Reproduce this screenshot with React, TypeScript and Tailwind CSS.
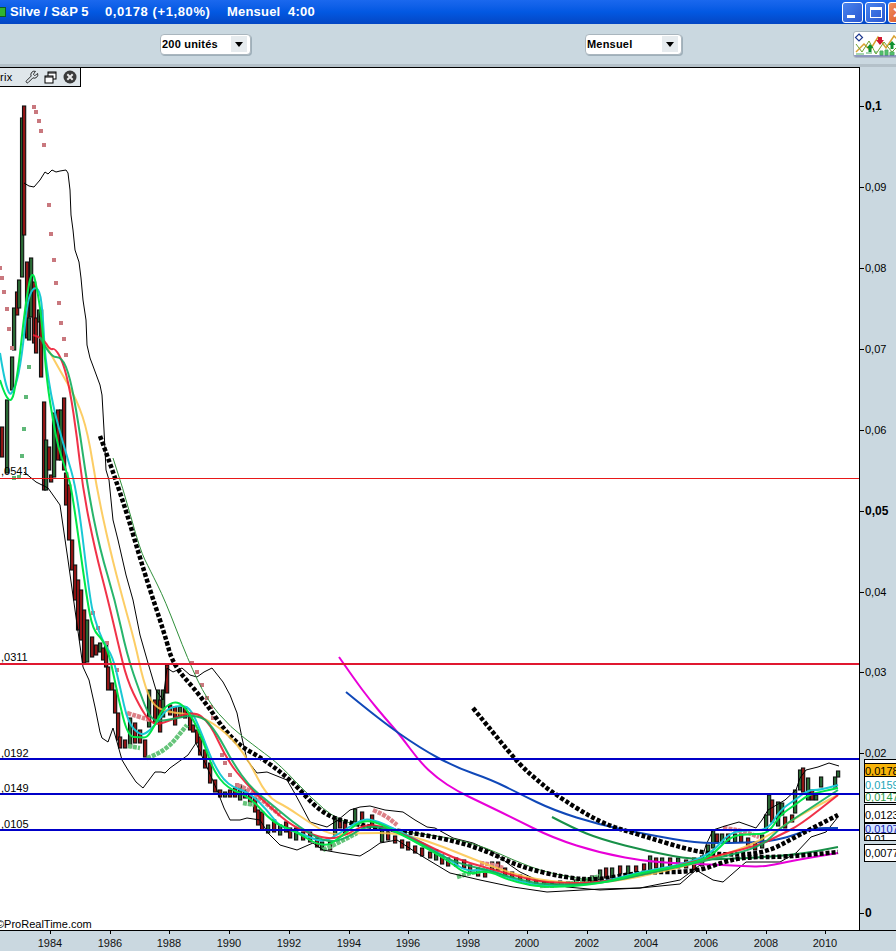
import React from 'react';
import { Wrench } from 'lucide-react';

type Pt = [number, number];
type Candle = [number, number, number, number];

// x, top, bottom, 1 = up (green), 0 = down (red)
const CANDLES: Candle[] = [
  [2,427,457,0],[7,400,473,1],[12,357,390,1],[14,308,350,1],[17,292,315,0],[19,280,308,1],[22,118,277,1],[24,106,235,0],
  [27,262,338,0],[29,318,340,1],[31,258,317,1],[34,282,343,0],[36,318,353,0],[39,310,322,1],[41,310,377,0],[44,402,490,0],
  [46,440,490,1],[49,447,470,0],[51,475,482,0],[54,413,477,1],[58,410,460,0],[61,410,460,1],[64,398,470,0],[66,473,505,0],
  [69,485,540,0],[72,540,570,0],[75,565,600,0],[78,580,630,0],[81,590,640,0],[84,610,663,0],[87,620,662,1],[92,637,657,0],
  [96,645,655,0],[100,643,652,1],[103,648,660,0],[106,645,667,0],[108,667,690,0],[112,683,690,0],[115,690,713,0],[118,713,740,0],
  [120,737,748,0],[125,740,748,0],[130,718,747,1],[135,723,743,0],[140,730,743,0],[145,740,757,0],[149,690,727,1],[155,700,723,0],
  [158,690,720,1],[160,700,732,0],[163,690,717,1],[167,665,693,0],[170,705,715,0],[175,707,725,0],[180,707,717,1],[185,707,718,0],
  [190,713,730,0],[193,725,732,0],[197,730,743,0],[200,737,755,0],[205,750,768,0],[210,763,783,0],[215,780,792,0],[220,790,797,0],
  [225,792,797,1],[230,790,797,0],[235,788,797,0],[240,785,800,1],[245,790,798,0],[250,795,805,0],[255,798,812,0],[258,810,825,0],
  [262,812,830,0],[268,825,833,1],[274,820,832,0],[280,825,835,1],[286,822,832,0],[290,828,838,0],[296,828,840,1],[303,832,840,0],
  [310,832,842,0],[317,838,847,0],[322,842,850,1],[330,842,850,0],[335,817,835,1],[340,820,828,0],[345,822,834,0],[355,809,822,1],
  [362,812,822,0],[372,815,826,0],[382,830,842,1],[388,832,840,0],[395,836,843,0],[402,840,848,0],[408,842,850,0],[415,846,853,0],
  [422,848,856,0],[430,852,858,0],[436,850,860,1],[442,855,864,0],[448,858,866,0],[456,858,866,1],[464,860,868,0],[470,865,872,0],
  [478,868,876,0],[485,872,877,0],[492,862,872,1],[498,862,870,0],[505,868,876,0],[512,872,878,0],[520,875,882,0],[528,878,884,0],
  [536,880,885,0],[544,882,887,0],[552,882,887,0],[560,881,886,1],[568,882,886,0],[576,880,885,1],[584,878,884,0],[592,876,883,1],
  [600,870,880,1],[606,868,878,0],[612,868,878,1],[620,866,874,0],[628,866,874,1],[636,866,872,0],[644,864,870,0],[650,856,870,1],
  [656,858,868,0],[662,858,868,1],[670,858,866,0],[678,858,868,1],[686,860,868,0],[694,858,870,0],[702,856,866,1],[708,845,860,1],
  [713,830,848,1],[717,834,842,0],[722,834,842,1],[728,834,842,0],[735,834,842,1],[741,834,842,0],[748,838,846,0],[755,842,850,0],
  [762,835,848,1],[766,815,830,1],[769,795,815,1],[772,800,822,0],[778,802,826,1],[782,803,815,1],[785,817,828,0],[792,815,822,0],
  [795,790,813,1],[800,770,790,1],[803,768,792,0],[808,778,800,1],[812,790,800,0],[816,795,800,1],[821,777,787,1],[835,777,787,1],[838,771,777,1],
];

const UPPER: Pt[] = [[24,183],[29,186],[34,187],[40,180],[45,172],[48,174],[52,170],[56,172],[60,171],[66,170],[68,173],[70,190],[71,215],[73,230],[75,250],[79,262],[81,278],[83,300],[86,320],[87,345],[90,358],[93,366],[100,385],[102,395],[104,430],[106,470],[109,480],[113,520],[118,540],[126,575],[133,600],[140,635],[148,663],[156,690],[163,700],[167,668],[173,672],[182,668],[190,675],[197,677],[204,672],[212,668],[223,682],[230,695],[237,713],[242,738],[247,760],[257,773],[267,772],[287,780],[294,792],[300,803],[310,822],[327,827],[338,820],[350,810],[360,807],[370,806],[385,810],[403,812],[415,820],[427,827],[435,828],[453,838],[473,843],[493,852],[510,865],[520,872],[537,880],[567,887],[600,890],[640,888],[680,880],[700,865],[706,845],[713,830],[725,826],[739,822],[756,828],[762,820],[768,810],[785,800],[796,790],[800,778],[806,770],[818,767],[829,763],[839,766]];
const LOWER: Pt[] = [[24,472],[36,482],[48,488],[60,505],[68,560],[75,610],[83,667],[89,680],[95,707],[100,732],[102,738],[108,742],[113,728],[117,742],[122,760],[128,770],[136,782],[143,788],[149,780],[155,772],[161,772],[165,773],[170,768],[177,763],[188,755],[196,743],[206,765],[217,790],[224,808],[230,820],[240,820],[247,818],[260,820],[268,833],[280,845],[297,850],[313,843],[323,850],[340,853],[360,856],[370,850],[380,843],[397,840],[420,855],[450,873],[480,880],[513,887],[547,892],[600,889],[640,888],[680,884],[696,870],[713,880],[723,882],[739,868],[746,862],[768,862],[780,862],[796,853],[811,837],[826,832],[838,817]];
const THIN_GREEN: Pt[] = [[113,458],[123,488],[140,550],[150,570],[165,600],[188,660],[207,700],[230,727],[260,750],[280,765],[310,797],[337,820],[367,827],[413,833],[453,838],[487,848],[513,860],[547,873],[600,882]];

const ORANGE: Pt[] = [[43,340],[58,367],[77,400],[88,433],[97,490],[110,550],[123,600],[135,643],[143,680],[153,707],[173,713],[200,715],[227,733],[247,757],[267,797],[287,807],[310,823],[330,835],[357,833],[403,833],[447,848],[487,865],[533,880],[600,885],[680,868],[740,850],[770,835],[800,815],[838,795]];
const RED: Pt[] = [[33,335],[43,338],[50,350],[55,348],[63,362],[70,390],[77,437],[83,490],[95,550],[108,600],[118,643],[127,680],[140,707],[150,722],[160,725],[193,710],[210,723],[227,760],[247,785],[270,807],[293,827],[327,840],[347,835],[367,823],[393,830],[423,843],[453,858],[487,868],[520,877],[547,883],[600,883],[650,873],[700,860],[760,845],[780,835],[800,825],[838,795]];
const GREEN_MA: Pt[] = [[40,337],[50,357],[62,357],[70,377],[78,420],[88,490],[100,550],[115,600],[127,655],[140,693],[150,718],[160,722],[200,713],[217,733],[233,763],[250,787],[270,803],[300,828],[327,843],[347,838],[367,825],[393,830],[423,845],[453,862],[487,870],[520,880],[547,885],[600,884],[650,873],[700,862],[760,848],[780,828],[800,815],[838,790]];
const CYAN: Pt[] = [[0,353],[7,397],[15,390],[22,357],[27,303],[33,287],[40,290],[43,317],[45,357],[53,407],[65,450],[77,490],[90,600],[95,620],[102,640],[113,657],[120,687],[128,723],[140,735],[147,733],[157,723],[167,708],[185,705],[193,713],[203,737],[213,763],[227,785],[250,793],[267,810],[280,827],[300,833],[323,843],[340,833],[357,822],[370,818],[397,830],[423,843],[450,860],[467,872],[487,868],[513,880],[547,887],[600,883],[640,872],[680,865],[710,855],[730,832],[750,830],[768,830],[780,810],[795,800],[808,790],[820,790],[838,785]];
const BRIGHT: Pt[] = [[0,380],[10,412],[18,373],[25,307],[32,267],[38,293],[42,323],[47,383],[53,420],[58,447],[67,473],[72,490],[87,600],[93,630],[103,640],[110,657],[118,697],[128,737],[140,737],[147,738],[155,725],[163,708],[177,700],[190,713],[203,740],[213,770],[227,788],[250,797],[273,823],[293,830],[323,848],[340,838],[357,823],[372,820],[397,832],[423,846],[450,862],[467,875],[487,870],[513,882],[547,888],[600,884],[640,873],[680,866],[710,858],[730,836],[750,834],[768,834],[780,815],[795,805],[808,795],[820,792],[838,788]];

const DOTTED_MAIN: Pt[] = [[100,436],[120,490],[145,575],[165,635],[173,665],[200,695],[233,742],[265,760],[293,782],[320,812],[347,823],[393,830],[437,837],[480,848],[520,867],[567,878],[600,880],[640,872],[696,872],[723,862],[746,857],[786,857],[838,852]];
const DOTTED_SECOND: Pt[] = [[473,708],[495,735],[520,765],[537,780],[553,793],[600,823],[640,835],[696,852],[729,855],[766,853],[799,835],[838,815]];
const MAGENTA: Pt[] = [[339,657],[355,680],[370,700],[385,718],[400,735],[420,762],[437,778],[457,791],[480,802],[513,818],[553,838],[600,853],[650,862],[696,864],[746,866],[763,867],[796,860],[838,853]];
const BLUE_CURVE: Pt[] = [[346,692],[380,720],[420,748],[455,767],[492,780],[520,794],[553,810],[600,825],[650,835],[696,843],[729,843],[763,842],[786,838],[813,828],[838,828]];
const TEAL_CURVE: Pt[] = [[552,817],[573,828],[600,839],[650,852],[696,860],[746,858],[796,855],[838,847]];

const SAR_RED: Pt[] = [[0,268],[2,278],[4,292],[7,309],[9,329],[12,348],[34,107],[36,112],[39,121],[41,131],[44,145],[49,205],[51,234],[54,260],[56,283],[59,303],[61,323],[64,339],[66,355],[93,613],[98,628],[107,643],[117,670],[192,663],[197,672],[202,685],[207,698],[211,707],[213,718],[222,755],[225,763],[230,775],[237,785]];
const SAR_GREEN: Pt[] = [[29,367],[26,397],[24,429],[22,456],[19,477],[14,478]];
const SAR_THICK: { color: string; pts: Pt[] }[] = [
  { color: '#dc7f86', pts: [[127,713],[140,717],[150,720]] },
  { color: '#dc7f86', pts: [[373,810],[385,815],[397,825]] },
  { color: '#dc7f86', pts: [[480,863],[490,864],[503,868]] },
  { color: '#dc7f86', pts: [[723,828],[740,830],[759,837]] },
  { color: '#dc7f86', pts: [[237,785],[250,790],[262,800],[280,815]] },
  { color: '#66c47a', pts: [[147,758],[165,752],[187,725]] },
  { color: '#66c47a', pts: [[128,746],[140,748]] },
  { color: '#66c47a', pts: [[323,850],[340,842],[357,833]] },
  { color: '#66c47a', pts: [[457,877],[470,873],[487,870]] },
  { color: '#66c47a', pts: [[243,803],[254,805]] },
  { color: '#66c47a', pts: [[540,886],[570,885],[600,876]] },
];

const H_LINES: { y: number; color: string; w: number; label?: string; ly?: number }[] = [
  { y: 478.5, color: '#e81818', w: 1, label: ',0541', ly: 475 },
  { y: 664, color: '#e01830', w: 2, label: ',0311', ly: 661 },
  { y: 759, color: '#0000c8', w: 2, label: ',0192', ly: 757 },
  { y: 794, color: '#0000c8', w: 2, label: ',0149', ly: 792 },
  { y: 830, color: '#0000c8', w: 2, label: ',0105', ly: 828 },
];

const Y_TICKS = [
  { y: 106, t: '0,1', bold: true }, { y: 187, t: '0,09' }, { y: 268, t: '0,08' }, { y: 349, t: '0,07' }, { y: 430, t: '0,06' },
  { y: 511, t: '0,05', bold: true }, { y: 592, t: '0,04' }, { y: 672, t: '0,03' }, { y: 753, t: '0,02' }, { y: 913, t: '0', bold: true },
];

const VALUE_TAGS: { y: number; h: number; t: string; color: string; bg: string; by: number }[] = [
  { y: 760, h: 4, t: '0,0188', color: '#000', bg: '#ffffff', by: 771 },
  { y: 764, h: 13, t: '0,0178', color: '#000', bg: '#f7b30a', by: 775 },
  { y: 777, h: 16, t: '0,0159', color: '#22a6b8', bg: '#ffffff', by: 789 },
  { y: 793, h: 9, t: '0,0147', color: '#2c9a48', bg: '#ffffff', by: 801 },
  { y: 805, h: 17, t: '0,0123', color: '#000', bg: '#ffffff', by: 819 },
  { y: 824, h: 9, t: '0,0107', color: '#1020b0', bg: '#d6e4ff', by: 833 },
  { y: 834, h: 6, t: '0,01', color: '#000', bg: '#ffffff', by: 843 },
  { y: 845, h: 16, t: '0,0077', color: '#000', bg: '#ffffff', by: 857 },
];

const YEARS: [number, string][] = [[50,'1984'],[110,'1986'],[169,'1988'],[229,'1990'],[289,'1992'],[349,'1994'],[408,'1996'],[468,'1998'],[527,'2000'],[587,'2002'],[646,'2004'],[706,'2006'],[766,'2008'],[825,'2010']];

const ARIAL = { fontFamily: '"Liberation Sans", Arial, sans-serif' };

// midpoint quadratic smoothing, enough for curves drawn from a few points
const smooth = (pts: Pt[]) => {
  let d = `M${pts[0][0]} ${pts[0][1]}`;
  for (let i = 1; i < pts.length - 1; i++) {
    const mx = (pts[i][0] + pts[i + 1][0]) / 2;
    const my = (pts[i][1] + pts[i + 1][1]) / 2;
    d += ` Q${pts[i][0]} ${pts[i][1]} ${mx} ${my}`;
  }
  const last = pts[pts.length - 1];
  return d + ` L${last[0]} ${last[1]}`;
};

const Curve: React.FC<{ pts: Pt[]; color: string; w: number; dash?: string; op?: number }> = ({ pts, color, w, dash, op }) => (
  <path d={smooth(pts)} fill="none" stroke={color} strokeWidth={w} strokeDasharray={dash} strokeOpacity={op} strokeLinejoin="round" />
);

const Band: React.FC<{ pts: Pt[] }> = ({ pts }) => (
  <polyline points={pts.map((p) => p.join(',')).join(' ')} fill="none" stroke="#000" strokeWidth={1} />
);

const PriceChart = () => (
  <svg viewBox="0 68 859 862" className="block w-[859px] h-[862px]" style={ARIAL}>
    {CANDLES.map(([x, top, bottom, up]) => (
      <rect key={x} x={x - 1.5} y={top} width={3.2} height={bottom - top} fill={up ? '#2a6b35' : '#941515'} stroke="#111" strokeWidth={1.1} />
    ))}
    {SAR_RED.map(([x, y]) => <rect key={`${x}-${y}`} x={x - 2} y={y - 2} width={4} height={4} fill="#c9787e" />)}
    {SAR_GREEN.map(([x, y]) => <rect key={`${x}-${y}`} x={x - 2} y={y - 2} width={4} height={4} fill="#5fb878" />)}
    {SAR_THICK.map((s, i) => <Curve key={i} pts={s.pts} color={s.color} w={4.5} dash="4 1" />)}

    <Band pts={UPPER} />
    <Band pts={LOWER} />
    <Curve pts={THIN_GREEN} color="#2f8f3a" w={1} />
    <Curve pts={MAGENTA} color="#e800d8" w={2} />
    <Curve pts={BLUE_CURVE} color="#1048b8" w={2} />
    <Curve pts={TEAL_CURVE} color="#189048" w={2} />
    <Curve pts={DOTTED_MAIN} color="#000" w={4.5} dash="4 2" />
    <Curve pts={DOTTED_SECOND} color="#000" w={4.5} dash="4 2" />
    <Curve pts={ORANGE} color="#fcc44a" w={2} op={0.85} />
    <Curve pts={CYAN} color="#19c8d4" w={2} />
    <Curve pts={RED} color="#ee1c34" w={2} op={0.9} />
    <Curve pts={GREEN_MA} color="#10ad5c" w={2} op={0.9} />
    <Curve pts={BRIGHT} color="#00e64a" w={2} />

    {H_LINES.map((l) => (
      <g key={l.y}>
        <line x1={0} x2={859} y1={l.y} y2={l.y} stroke={l.color} strokeWidth={l.w} />
        <text x={1} y={l.ly} fontSize={11} fill="#000">{l.label}</text>
      </g>
    ))}
    <text x={-4} y={928} fontSize={11} fill="#000">©ProRealTime.com</text>
  </svg>
);

const PriceAxis = () => (
  <svg viewBox="860 67 36 863" className="block w-[36px] h-[863px]" style={ARIAL}>
    {Y_TICKS.map((t) => (
      <g key={t.y}>
        <line x1={860} x2={864} y1={t.y + 0.5} y2={t.y + 0.5} stroke="#000" />
        <text x={865} y={t.y + 4} fontSize={t.bold ? 12 : 11} fontWeight={t.bold ? 700 : 400} fill="#000">{t.t}</text>
      </g>
    ))}
    {VALUE_TAGS.map((v) => (
      <g key={v.t}>
        <rect x={864.5} y={v.y - 0.5} width={32} height={v.h + 1} fill={v.bg} stroke="#000" />
        <svg x={865} y={v.y} width={31} height={v.h} viewBox={`865 ${v.y} 31 ${v.h}`}>
          <text x={865} y={v.by} fontSize={11} fill={v.color}>{v.t}</text>
        </svg>
      </g>
    ))}
  </svg>
);

const TimeAxis = () => (
  <svg viewBox="0 931 896 20" className="block w-[896px] h-[20px]" style={ARIAL}>
    {YEARS.map(([x, t]) => (
      <g key={t}>
        <line x1={x + 0.5} x2={x + 0.5} y1={931} y2={934} stroke="#000" />
        <text x={x} y={947} fontSize={11} textAnchor="middle" fill="#111">{t}</text>
      </g>
    ))}
  </svg>
);

const SelectBox: React.FC<{ label: string; className: string }> = ({ label, className }) => (
  <div className={`flex items-center justify-between h-[21px] bg-white rounded-[4px] border border-[#aab6be] pl-[1px] pr-[3px] shadow-[1px_1px_0_#9fb0ba] ${className}`}>
    <span className="text-[11px] font-bold text-black leading-none tracking-[0.2px]">{label}</span>
    <span className="flex items-center justify-center w-[16px] h-[16px] bg-[#e6ebee]">
      <span className="w-0 h-0 border-l-[4px] border-r-[4px] border-t-[5px] border-l-transparent border-r-transparent border-t-black" />
    </span>
  </div>
);

const IndicatorIcon = () => (
  <svg viewBox="0 0 44 25" className="w-[44px] h-[25px]">
    <polyline points="2,20 10,12 16,18 24,5 32,16 40,4 44,8" fill="none" stroke="#d8a030" strokeWidth={1.5} />
    <polyline points="2,12 8,20 15,9 22,22 30,10 38,20 44,14" fill="none" stroke="#70a030" strokeWidth={1} />
    <path d="M5 2l3.5 3.5L5 9 1.5 5.5z" fill="#fff" stroke="#203a90" strokeWidth={1.2} />
    <path d="M24 5h4v3h2l-4 5-4-5h2z" fill="#d01830" />
    <path d="M16 12l3.5 4h-2v4h-3v-4h-2z" fill="#109030" />
    <path d="M38 9l3.5 4h-2v4h-3v-4h-2z" fill="#109030" />
    <path d="M2 22h8M12 21h6M20 20h3M26 19h3v4h-3zM31 18h3v5h-3zM36 20h4v3h-4z" stroke="#50b060" fill="#50c070" />
    <line x1={0} x2={44} y1={24} y2={24} stroke="#203080" />
  </svg>
);

const WinButton: React.FC<{ className: string; children: React.ReactNode }> = ({ className, children }) => (
  <div className={`flex items-center justify-center w-[21px] h-[21px] rounded-[3px] border border-white ${className}`}>{children}</div>
);

const LegendBox = () => (
  <div className="absolute top-0 left-0 flex items-center w-[81px] h-[19px] bg-[#dfe6ea] border-r border-b border-black">
    <span className="text-[11px] text-black w-[25px] leading-none tracking-[0.3px]">rix</span>
    <Wrench className="w-[14px] h-[14px] text-black mr-[5px]" strokeWidth={1.4} />
    <svg viewBox="0 0 13 13" className="w-[13px] h-[13px] mr-[6px]">
      <rect x="4" y="1" width="8" height="7" fill="#fff" stroke="#000" />
      <rect x="1" y="5" width="8" height="7" fill="#fff" stroke="#000" />
      <line x1="1" x2="9" y1="6" y2="6" stroke="#000" />
      <line x1="4" x2="12" y1="2" y2="2" stroke="#000" />
    </svg>
    <svg viewBox="0 0 14 14" className="w-[14px] h-[14px]">
      <circle cx="7" cy="7" r="6.5" fill="#3a3a3a" />
      <path d="M4.3 4.3l5.4 5.4M9.7 4.3l-5.4 5.4" stroke="#e8e8e8" strokeWidth={2} />
    </svg>
  </div>
);

export default function App() {
  return (
    <div className="flex flex-col w-[896px] h-[951px] overflow-hidden bg-[#cad8e0]" style={ARIAL}>
      <div className="flex items-center justify-between h-[24px] pl-0 bg-linear-to-b from-[#1a68ee] via-[#0258e2] to-[#0446c4]">
        <div className="flex items-center text-[13px] font-bold text-white whitespace-pre">
          <span className="w-[6px] h-[10px] bg-[#2fb52f] border border-l-0 border-[#0f5a20]" />
          <span className="ml-[4px] w-[95px]">Silve / S&amp;P 5</span>
          <span className="w-[122px] tracking-[0.6px]">0,0178 (+1,80%)</span>
          <span className="tracking-[0.2px]">Mensuel  4:00</span>
        </div>
        <div className="flex items-center gap-[2px] -mr-[13px]">
          <WinButton className="bg-linear-to-br from-[#4a84ee] to-[#2a56d0]">
            <span className="w-[8px] h-[3px] bg-white mt-[8px] -ml-[4px]" />
          </WinButton>
          <WinButton className="bg-linear-to-br from-[#4a84ee] to-[#2a56d0]">
            <span className="w-[12px] h-[11px] border border-t-[3px] border-white" />
          </WinButton>
          <WinButton className="bg-linear-to-br from-[#f09060] to-[#d84818]">
            <span className="text-white font-bold text-[15px] leading-none">✕</span>
          </WinButton>
        </div>
      </div>

      <div className="relative flex items-center h-[43px] bg-[#cad8e0] border-b-[3px] border-[#b4c1c9]">
        <SelectBox label="200 unités" className="ml-[160px] w-[91px]" />
        <SelectBox label="Mensuel" className="ml-[334px] w-[97px]" />
        <div className="ml-auto -mr-[1px] w-[44px] h-[27px] bg-white border border-[#a9b6be] rounded-l-[3px] overflow-hidden">
          <IndicatorIcon />
        </div>
      </div>

      <div className="flex h-[863px]">
        <div className="relative w-[860px] bg-white border-t border-r border-black">
          <LegendBox />
          <PriceChart />
        </div>
        <PriceAxis />
      </div>

      <div className="h-[21px] border-t border-black">
        <TimeAxis />
      </div>
    </div>
  );
}
